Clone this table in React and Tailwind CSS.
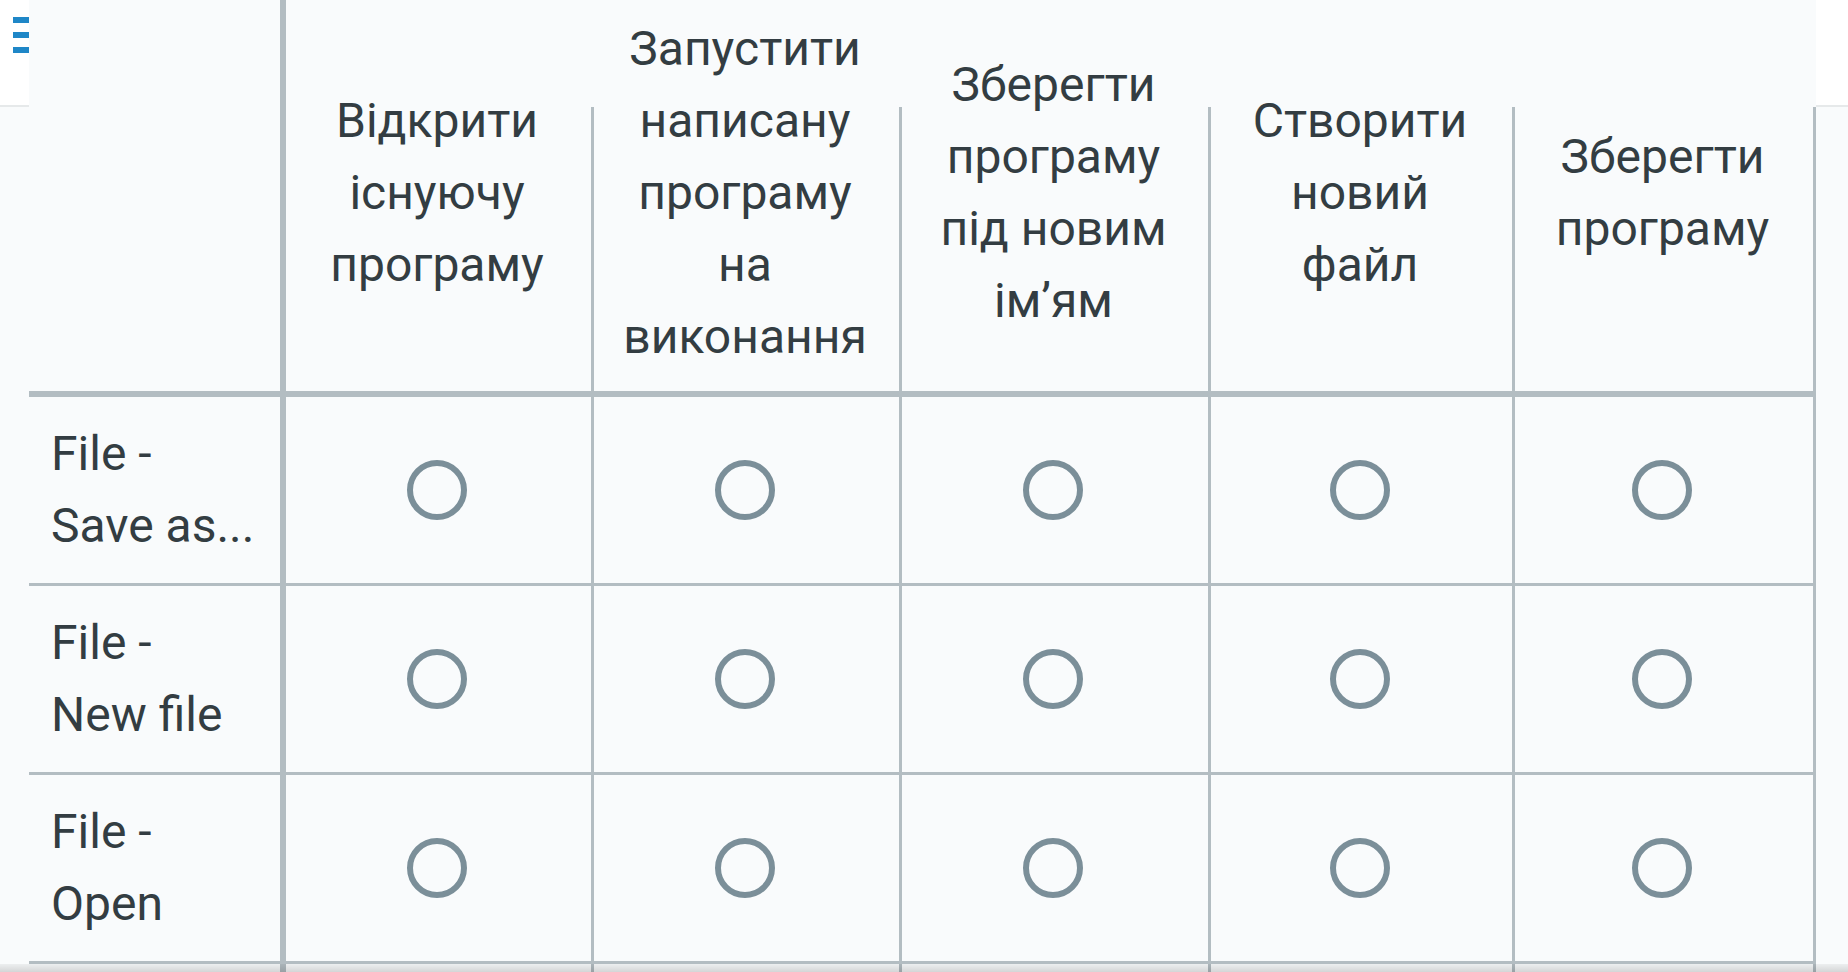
import React from "react";

const cols = [
  { w: "w-[308px]", lines: ["Відкрити", "існуючу", "програму"] },
  { w: "w-[308px]", lines: ["Запустити", "написану", "програму", "на", "виконання"] },
  { w: "w-[309px]", lines: ["Зберегти", "програму", "під новим", "ім’ям"] },
  { w: "w-[304px]", lines: ["Створити", "новий", "файл"] },
  { w: "w-[301px]", lines: ["Зберегти", "програму"] },
];

const rows = [
  ["File -", "Save as..."],
  ["File -", "New file"],
  ["File -", "Open"],
];

function Radio() {
  return <div className="w-[60px] h-[60px] rounded-full border-[6px] border-[#7b8f99]" />;
}

export default function App() {
  return (
    <div className="relative w-[1848px] h-[972px] overflow-hidden bg-[#f9fbfc] font-['Roboto',sans-serif] text-[#333d42] text-[48px] leading-[72px]">
      <div className="absolute left-0 top-0 w-full h-[107px] bg-white border-b-2 border-[#e6e9ea]">
        <div className="absolute left-[13px] top-[17px] flex flex-col gap-[9px]">
          <div className="w-[24px] h-[6px] bg-[#1f87c7]" />
          <div className="w-[24px] h-[6px] bg-[#1f87c7]" />
          <div className="w-[24px] h-[6px] bg-[#1f87c7]" />
        </div>
      </div>

      <div className="relative z-10 ml-[29px] mt-[-6px] w-[1787px] bg-[#f9fbfc]">
        {/* header row */}
        <div className="flex h-[403px] border-b-[6px] border-[#b3bdc2]">
          <div className="w-[257px] shrink-0 border-r-[6px] border-[#b3bdc2]" />
          {cols.map((c, i) => (
            <div key={i} className={`${c.w} shrink-0 relative flex items-center justify-center pr-[6px] text-center`}>
              <div>
                {c.lines.map((l, j) => (
                  <div key={j}>{l}</div>
                ))}
              </div>
              <div className="absolute right-0 top-[113px] bottom-0 w-[3px] bg-[#b3bdc2]" />
            </div>
          ))}
        </div>

        {rows.map((r, i) => (
          <div key={i} className="flex h-[189px] border-b-[3px] border-[#b3bdc2]">
            <div className="w-[257px] shrink-0 border-r-[6px] border-[#b3bdc2] pl-[22px] flex flex-col justify-center">
              <div>{r[0]}</div>
              <div>{r[1]}</div>
            </div>
            {cols.map((c, j) => (
              <div key={j} className={`${c.w} shrink-0 border-r-[3px] border-[#b3bdc2] pr-[4px] flex items-center justify-center`}>
                <Radio />
              </div>
            ))}
          </div>
        ))}

        {/* next row, mostly out of view */}
        <div className="flex h-[189px]">
          <div className="w-[257px] shrink-0 border-r-[6px] border-[#b3bdc2]" />
          {cols.map((c, j) => (
            <div key={j} className={`${c.w} shrink-0 border-r-[3px] border-[#b3bdc2]`} />
          ))}
        </div>
      </div>

      {/* bottom shade */}
      <div className="absolute z-20 left-0 bottom-0 w-full h-[8px] bg-gradient-to-b from-black/5 to-black/15" />
    </div>
  );
}
